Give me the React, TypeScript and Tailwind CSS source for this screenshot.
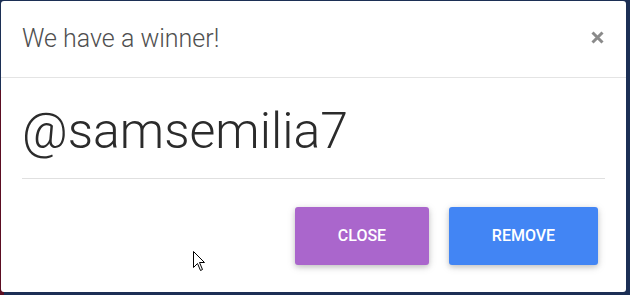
export default function App() {
  return (
    <div className="relative w-[630px] h-[295px] overflow-hidden bg-[#1c2f55]">
      <div className="absolute left-0 top-[90px] w-[4px] h-[205px] bg-[#5b0d22]" />
      <div
        className="absolute left-[1px] top-[1px] w-[625px] h-[291px] bg-white rounded-[3px] flex flex-col"
        style={{ fontFamily: "Roboto, 'Liberation Sans', sans-serif" }}
      >
        {/* Header */}
        <div className="h-[77px] flex items-center justify-between pl-[21px] pr-[22px] border-b border-[#e4e4e4]">
          <h4 className="text-[25px] font-light text-[#4f4f4f] leading-none pb-[2px]">We have a winner!</h4>
          <button className="text-[#888] pb-[4px]" aria-label="close">
            <svg width="13" height="13" viewBox="0 0 13 13">
              <path d="M1.5 1.5 L11.5 11.5 M11.5 1.5 L1.5 11.5" stroke="#8a8a8a" strokeWidth="3" />
            </svg>
          </button>
        </div>

        {/* Body */}
        <div className="px-[21px]">
          <div className="h-[101px] flex items-center border-b border-[#e0e0e0]">
            <span className="text-[50px] font-light text-[#2b2b2b] leading-none pt-[6px]">@samsemilia7</span>
          </div>
        </div>

        {/* Footer */}
        <div className="flex justify-end gap-[20px] pr-[28px] pt-[28px]">
          <button className="w-[134px] h-[58px] rounded-[3px] bg-[#aa66cc] text-white text-[16px] font-medium shadow-[0_2px_5px_rgba(0,0,0,0.16),0_2px_10px_rgba(0,0,0,0.12)]">
            CLOSE
          </button>
          <button className="w-[149px] h-[58px] rounded-[3px] bg-[#4285f4] text-white text-[16px] font-medium shadow-[0_2px_5px_rgba(0,0,0,0.16),0_2px_10px_rgba(0,0,0,0.12)]">
            REMOVE
          </button>
        </div>
      </div>

      {/* mouse cursor */}
      <svg className="absolute left-[193px] top-[251px]" width="13" height="21" viewBox="0 0 13 21">
        <path
          d="M0.5 0.5 L0.5 16.5 L4.5 12.5 L7.5 19.5 L9.5 18.5 L6.5 11.5 L11.5 11.5 Z"
          fill="white"
          stroke="black"
          strokeWidth="1"
          strokeLinejoin="miter"
        />
      </svg>
    </div>
  );
}
